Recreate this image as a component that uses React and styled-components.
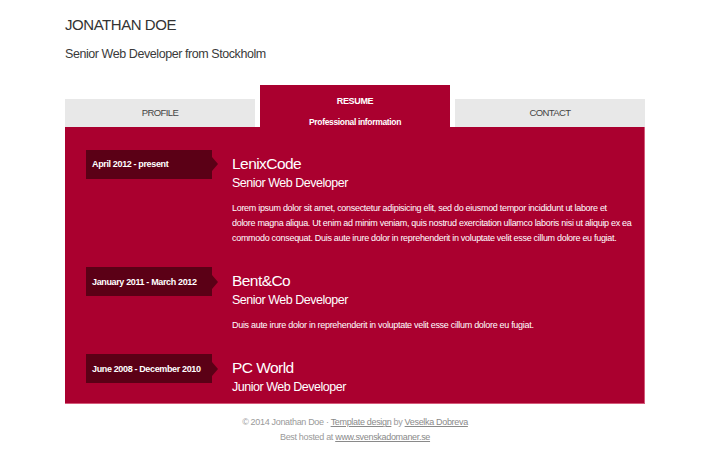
import React from "react";
import styled, { createGlobalStyle } from "styled-components";

const GlobalStyle = createGlobalStyle`
  html, body {
    margin: 0;
    padding: 0;
    background: #ffffff;
  }
  body {
    font-family: "Liberation Sans", Arial, sans-serif;
    color: #333333;
  }
  * { box-sizing: border-box; }
`;

const RED = "#aa002f";
const DARK = "#5b0016";

const Page = styled.div`
  width: 580px;
  margin: 0 auto;
`;

const Header = styled.header`
  padding-top: 13.5px;
`;

const Name = styled.h1`
  margin: 0;
  font-size: 15px;
  letter-spacing: -0.45px;
  line-height: 21px;
  font-weight: 400;
  color: #333333;
`;

const Tagline = styled.p`
  margin: 11.7px 0 0;
  font-size: 12.5px;
  letter-spacing: -0.43px;
  line-height: 17px;
  color: #3a3a3a;
`;

const Tabs = styled.nav`
  display: flex;
  align-items: flex-end;
  gap: 5px;
  margin-top: 21.8px;
`;

const Tab = styled.div`
  flex: 1;
  height: ${(p) => (p.$active ? "42px" : "28px")};
  background: ${(p) => (p.$active ? RED : "#e8e8e8")};
  color: ${(p) => (p.$active ? "#ffffff" : "#444444")};
  display: flex;
  flex-direction: column;
  align-items: center;
  justify-content: ${(p) => (p.$active ? "flex-start" : "center")};
  padding-top: ${(p) => (p.$active ? "10px" : "0")};
  text-transform: uppercase;
  font-size: 9.5px;
  letter-spacing: -0.6px;
  line-height: 12px;
`;

const TabTitle = styled.span`
  font-weight: 700;
  font-size: 9px;
  letter-spacing: -0.35px;
`;

const TabSub = styled.span`
  margin-top: 9px;
  font-weight: 700;
  font-size: 8.5px;
  letter-spacing: -0.34px;
  text-transform: none;
`;

const Panel = styled.main`
  background: ${RED};
  padding: 23px 0 6.6px 21px;
  border-right: 1px solid #d45a7a;
  border-bottom: 1px solid #d45a7a;
  display: flex;
  flex-direction: column;
  gap: 21.5px;
`;

const Entry = styled.section`
  display: grid;
  grid-template-columns: 126px 1fr;
  column-gap: 20px;
  align-items: start;
`;

const DateTag = styled.div`
  position: relative;
  height: 29px;
  background: ${DARK};
  color: #ffffff;
  font-weight: 700;
  font-size: 9px;
  letter-spacing: -0.36px;
  padding-left: 6px;
  display: flex;
  align-items: center;
  white-space: nowrap;

  &::after {
    content: "";
    position: absolute;
    left: 100%;
    top: 50%;
    margin-top: -7px;
    border-left: 6px solid ${DARK};
    border-top: 7px solid transparent;
    border-bottom: 7px solid transparent;
  }
`;

const Body = styled.div`
  padding-top: 3px;
  color: #ffffff;
`;

const Company = styled.h2`
  margin: 0;
  font-size: 15.5px;
  letter-spacing: -0.55px;
  line-height: 21px;
  font-weight: 400;
`;

const Role = styled.h3`
  margin: 1px 0 0;
  font-size: 12.5px;
  letter-spacing: -0.48px;
  line-height: 17px;
  font-weight: 400;
`;

const Description = styled.p`
  margin: 8.6px 0 0;
  width: 400px;
  font-size: 9px;
  letter-spacing: -0.3px;
  line-height: 15px;
`;

const Footer = styled.footer`
  padding-top: 11.5px;
  text-align: center;
  font-size: 9px;
  letter-spacing: -0.32px;
  line-height: 15px;
  color: #9a9a9a;
`;

const FooterLink = styled.a`
  color: #8a8a8a;
  text-decoration: underline;
`;

const jobs = [
  {
    date: "April 2012 - present",
    company: "LenixCode",
    role: "Senior Web Developer",
    text:
      "Lorem ipsum dolor sit amet, consectetur adipisicing elit, sed do eiusmod tempor incididunt ut labore et dolore magna aliqua. Ut enim ad minim veniam, quis nostrud exercitation ullamco laboris nisi ut aliquip ex ea commodo consequat. Duis aute irure dolor in reprehenderit in voluptate velit esse cillum dolore eu fugiat.",
  },
  {
    date: "January 2011 - March 2012",
    company: "Bent&Co",
    role: "Senior Web Developer",
    text:
      "Duis aute irure dolor in reprehenderit in voluptate velit esse cillum dolore eu fugiat.",
  },
  {
    date: "June 2008 - December 2010",
    company: "PC World",
    role: "Junior Web Developer",
    text: "",
  },
];

export default function App() {
  return (
    <>
      <GlobalStyle />
      <Page>
        <Header>
          <Name>JONATHAN DOE</Name>
          <Tagline>Senior Web Developer from Stockholm</Tagline>
        </Header>
        <Tabs>
          <Tab>Profile</Tab>
          <Tab $active>
            <TabTitle>Resume</TabTitle>
            <TabSub>Professional information</TabSub>
          </Tab>
          <Tab>Contact</Tab>
        </Tabs>
        <Panel>
          {jobs.map((j) => (
            <Entry key={j.company}>
              <DateTag>{j.date}</DateTag>
              <Body>
                <Company>{j.company}</Company>
                <Role>{j.role}</Role>
                {j.text && <Description>{j.text}</Description>}
              </Body>
            </Entry>
          ))}
        </Panel>
        <Footer>
          © 2014 Jonathan Doe · <FooterLink href="#">Template design</FooterLink> by{" "}
          <FooterLink href="#">Veselka Dobreva</FooterLink>
          <br />
          Best hosted at <FooterLink href="#">www.svenskadomaner.se</FooterLink>
        </Footer>
      </Page>
    </>
  );
}
